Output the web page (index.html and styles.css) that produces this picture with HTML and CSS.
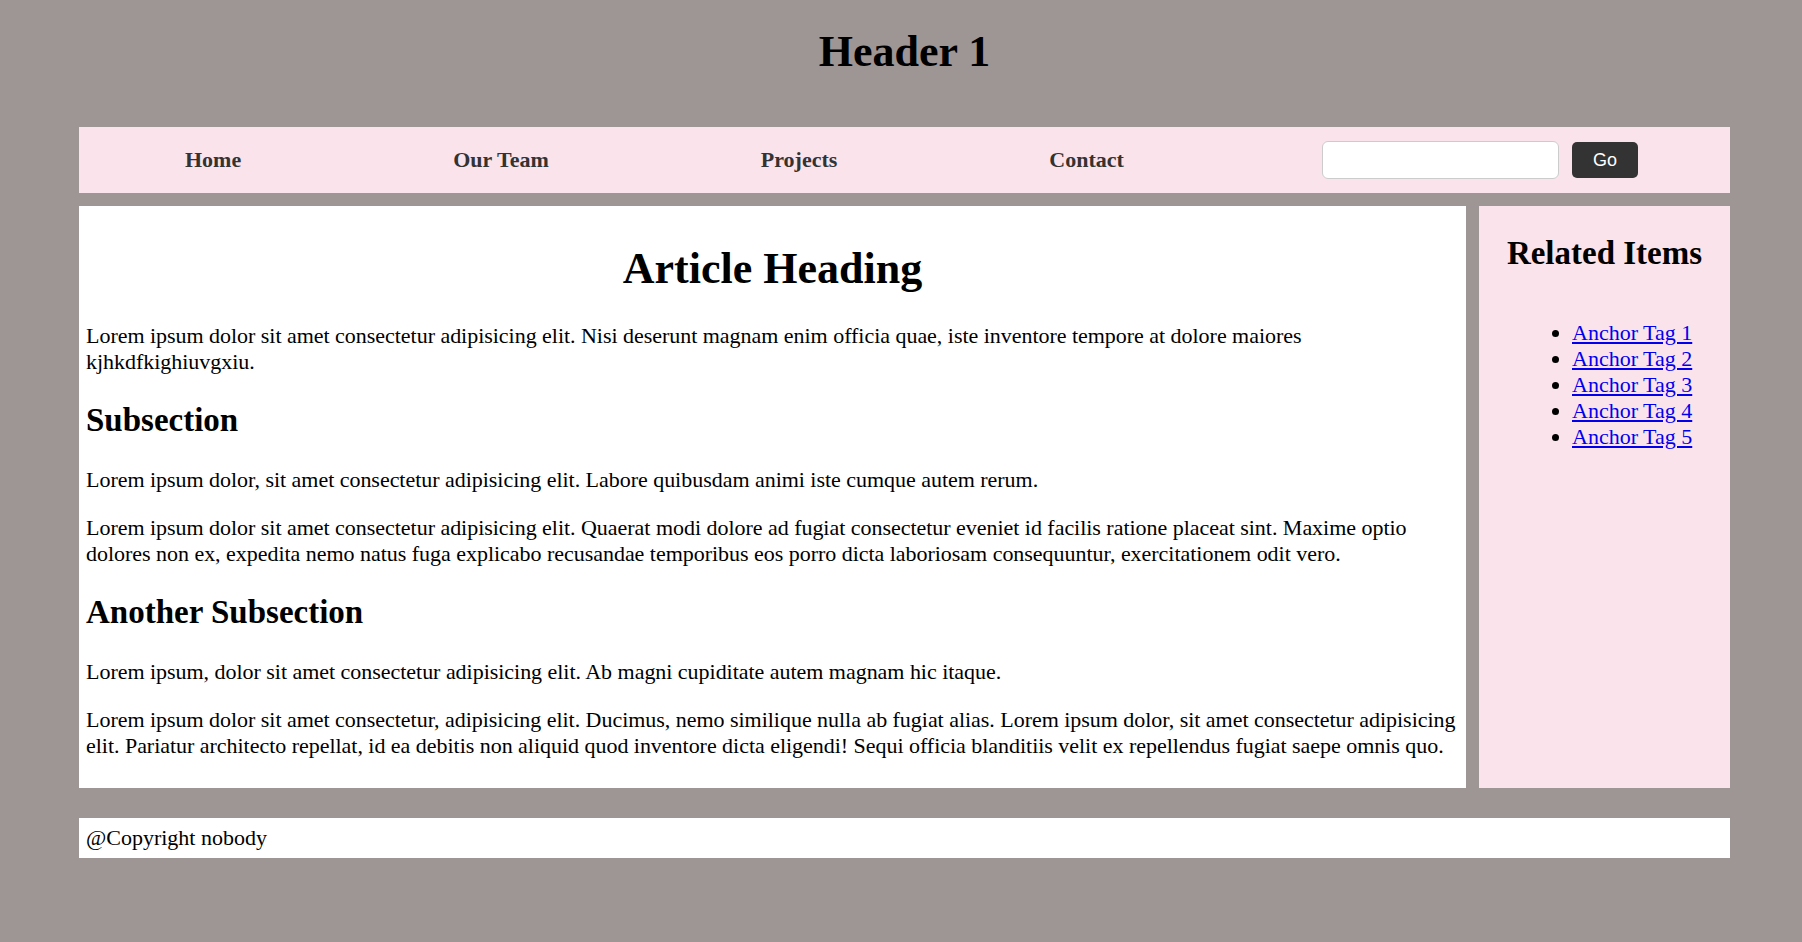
FILE: index.html
```html
<!DOCTYPE html>
<html lang="en">
<head>
<meta charset="utf-8">
<title>Header 1</title>
<link rel="stylesheet" href="styles.css">
</head>
<body>
<div class="page">
  <header class="site-header">
    <h1>Header 1</h1>
  </header>
  <nav class="topnav">
    <a class="nav-link" href="#">Home</a>
    <a class="nav-link" href="#">Our Team</a>
    <a class="nav-link" href="#">Projects</a>
    <a class="nav-link" href="#">Contact</a>
    <form class="search">
      <input class="search-input" type="text">
      <button class="search-btn" type="button">Go</button>
    </form>
  </nav>
  <div class="content">
    <main class="article">
      <h1 class="article-title">Article Heading</h1>
      <p>Lorem ipsum dolor sit amet consectetur adipisicing elit. Nisi deserunt magnam enim officia quae, iste inventore tempore at dolore maiores kjhkdfkighiuvgxiu.</p>
      <h2>Subsection</h2>
      <p>Lorem ipsum dolor, sit amet consectetur adipisicing elit. Labore quibusdam animi iste cumque autem rerum.</p>
      <p>Lorem ipsum dolor sit amet consectetur adipisicing elit. Quaerat modi dolore ad fugiat consectetur eveniet id facilis ratione placeat sint. Maxime optio dolores non ex, expedita nemo natus fuga explicabo recusandae temporibus eos porro dicta laboriosam consequuntur, exercitationem odit vero.</p>
      <h2>Another Subsection</h2>
      <p>Lorem ipsum, dolor sit amet consectetur adipisicing elit. Ab magni cupiditate autem magnam hic itaque.</p>
      <p>Lorem ipsum dolor sit amet consectetur, adipisicing elit. Ducimus, nemo similique nulla ab fugiat alias. Lorem ipsum dolor, sit amet consectetur adipisicing elit. Pariatur architecto repellat, id ea debitis non aliquid quod inventore dicta eligendi! Sequi officia blanditiis velit ex repellendus fugiat saepe omnis quo.</p>
    </main>
    <aside class="related">
      <h2>Related Items</h2>
      <ul class="related-list">
        <li><a href="#">Anchor Tag 1</a></li>
        <li><a href="#">Anchor Tag 2</a></li>
        <li><a href="#">Anchor Tag 3</a></li>
        <li><a href="#">Anchor Tag 4</a></li>
        <li><a href="#">Anchor Tag 5</a></li>
      </ul>
    </aside>
  </div>
  <footer class="site-footer">@Copyright nobody</footer>
</div>
</body>
</html>
```
FILE: styles.css
```css
html, body {
  margin: 0;
  padding: 0;
}

body {
  background: #9e9595;
  font-family: "Liberation Serif", "Times New Roman", serif;
  font-size: 22px;
  color: #000;
}

.page {
  width: 1651px;
  margin-left: 79px;
  padding-bottom: 86px;
}

.site-header {
  padding-top: 26px;
  padding-bottom: 50px;
}

.site-header h1 {
  margin: 0;
  font-size: 44px;
  text-align: center;
}

.topnav {
  display: flex;
  align-items: center;
  height: 66px;
  background: #fbe3eb;
}

.nav-link {
  padding: 0 106px;
  color: #333;
  font-weight: bold;
  text-decoration: none;
}

.search {
  display: flex;
  align-items: center;
  gap: 13px;
  margin: 0 92px 0 auto;
}

.search-input {
  box-sizing: border-box;
  width: 237px;
  height: 38px;
  border: 1px solid #ccc;
  border-radius: 6px;
  background: #fff;
  padding: 0 8px;
}

.search-btn {
  box-sizing: border-box;
  width: 66px;
  height: 36px;
  border: none;
  border-radius: 5px;
  background: #333;
  color: #fff;
  font-family: "Liberation Sans", Arial, sans-serif;
  font-size: 18px;
}

.content {
  display: grid;
  grid-template-columns: 1387px 251px;
  gap: 13px;
  margin-top: 13px;
}

.article {
  background: #fff;
  padding: 7px;
}

.article-title {
  font-size: 44px;
  text-align: center;
  margin: 29.5px 0;
}

.article h2 {
  font-size: 33px;
  margin: 27.4px 0;
}

.article p {
  margin: 22px 0;
  letter-spacing: -0.03px;
}

.related {
  background: #fbe3eb;
  padding: 0;
}

.related h2 {
  font-size: 33px;
  text-align: center;
  margin: 29px 0 0;
}

.related-list {
  margin: 48px 0 0;
  padding-left: 93px;
}

.related-list a {
  color: #00e;
}

.site-footer {
  margin-top: 30px;
  background: #fff;
  padding: 7px;
}
```
